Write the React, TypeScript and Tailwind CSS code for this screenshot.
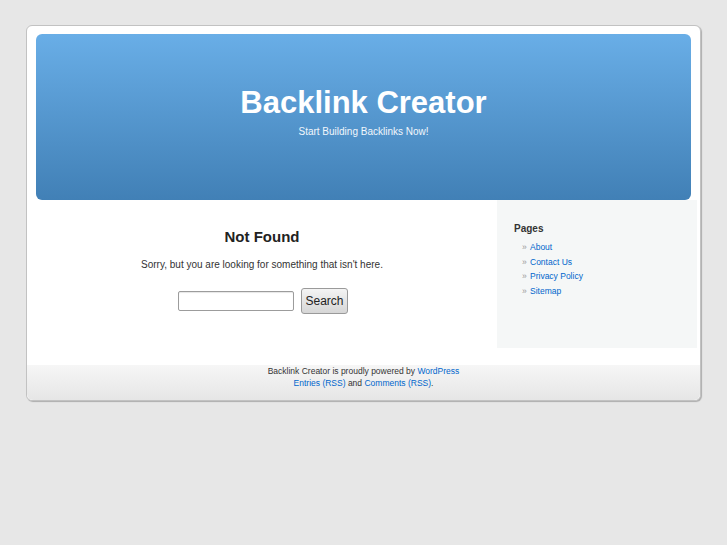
export default function App() {
  const pages = ['About', 'Contact Us', 'Privacy Policy', 'Sitemap'];

  return (
    <div
      className="min-h-screen w-full bg-[#e7e7e7] pt-[25px] text-[#333]"
      style={{ fontFamily: '"Liberation Sans", Arial, sans-serif' }}
    >
      {/* Page box */}
      <div className="ml-[26px] w-[675px] rounded-[6px] border border-[#c2c2c2] bg-white shadow-[1px_1px_1px_rgba(0,0,0,0.25)]">
        {/* Header */}
        <div className="px-[9px] pt-[8px]">
          <div className="flex h-[166px] flex-col items-center rounded-[6px] bg-gradient-to-b from-[#69aee7] to-[#4180b6] pt-[53px] text-white">
            <h1 className="text-[31px] font-bold leading-[31px]">Backlink Creator</h1>
            <p className="mt-[8px] text-[10px] leading-[12px] text-[#f2f7fc]">Start Building Backlinks Now!</p>
          </div>
        </div>

        {/* Content + sidebar */}
        <div className="flex">
          <div className="flex w-[470px] flex-col items-center pt-[28px]">
            <h2 className="text-[15px] font-bold leading-[18px] text-[#222]">Not Found</h2>
            <p className="mt-[13px] text-[10px] leading-[12px] text-[#333]">
              Sorry, but you are looking for something that isn't here.
            </p>
            <div className="ml-[2px] mt-[17px] flex items-center gap-[7px]">
              <input
                type="text"
                className="h-[20px] w-[116px] rounded-[2px] border border-[#9c9c9c] bg-white shadow-[inset_0_1px_1px_rgba(0,0,0,0.1)] outline-none"
              />
              <button className="h-[26px] w-[47px] rounded-[3px] border border-[#9a9a9a] bg-gradient-to-b from-[#f4f4f4] to-[#d6d6d6] text-[12px] text-[#222]">
                Search
              </button>
            </div>
          </div>

          <div className="h-[148px] w-[200px] bg-[#f5f7f7] pl-[17px] pt-[23px]">
            <h2 className="text-[10px] font-bold leading-[12px] text-[#333]">Pages</h2>
            <ul className="mt-[5px] pl-[8px]">
              {pages.map((p) => (
                <li key={p} className="flex text-[8.5px] leading-[14.5px]">
                  <span className="w-[8px] text-[#999]">»</span>
                  <a href="#" className="text-[#0066cc]">
                    {p}
                  </a>
                </li>
              ))}
            </ul>
          </div>
        </div>

        {/* Footer */}
        <div className="mt-[17px] h-[35px] rounded-b-[6px] bg-gradient-to-b from-[#f6f6f6] to-[#e6e6e6] text-center text-[8.5px] leading-[12px] text-[#333]">
          <p>
            Backlink Creator is proudly powered by <a href="#" className="text-[#0066cc]">WordPress</a>
          </p>
          <p>
            <a href="#" className="text-[#0066cc]">Entries (RSS)</a> and{' '}
            <a href="#" className="text-[#0066cc]">Comments (RSS)</a>.
          </p>
        </div>
      </div>
    </div>
  );
}
